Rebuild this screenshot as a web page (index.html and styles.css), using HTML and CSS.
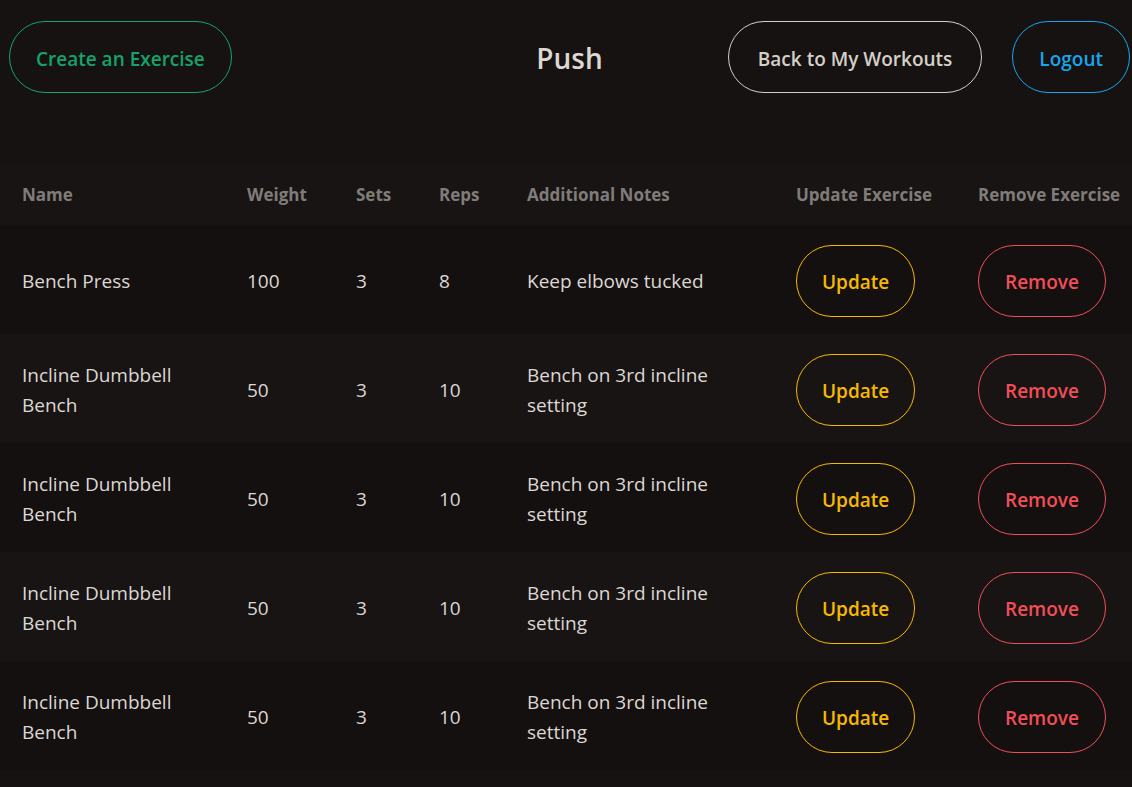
FILE: index.html
```html
<!DOCTYPE html>
<html lang="en">
<head>
<meta charset="utf-8">
<title>Push</title>
<link rel="stylesheet" href="styles.css">
</head>
<body>
<header class="topbar">
  <div class="left"><button class="pill pill-green">Create an Exercise</button></div>
  <h1 class="title">Push</h1>
  <div class="right">
    <button class="pill pill-light">Back to My Workouts</button>
    <button class="pill pill-blue">Logout</button>
  </div>
</header>
<table class="exercises">
  <colgroup>
    <col class="c-name"><col class="c-weight"><col class="c-sets"><col class="c-reps"><col class="c-notes"><col class="c-update"><col class="c-remove">
  </colgroup>
  <thead>
    <tr><th>Name</th><th>Weight</th><th>Sets</th><th>Reps</th><th>Additional Notes</th><th>Update Exercise</th><th>Remove Exercise</th></tr>
  </thead>
  <tbody>
    <tr><td>Bench Press</td><td>100</td><td>3</td><td>8</td><td>Keep elbows tucked</td><td><button class="pill pill-yellow">Update</button></td><td><button class="pill pill-red">Remove</button></td></tr>
    <tr><td>Incline Dumbbell Bench</td><td>50</td><td>3</td><td>10</td><td>Bench on 3rd incline setting</td><td><button class="pill pill-yellow">Update</button></td><td><button class="pill pill-red">Remove</button></td></tr>
    <tr><td>Incline Dumbbell Bench</td><td>50</td><td>3</td><td>10</td><td>Bench on 3rd incline setting</td><td><button class="pill pill-yellow">Update</button></td><td><button class="pill pill-red">Remove</button></td></tr>
    <tr><td>Incline Dumbbell Bench</td><td>50</td><td>3</td><td>10</td><td>Bench on 3rd incline setting</td><td><button class="pill pill-yellow">Update</button></td><td><button class="pill pill-red">Remove</button></td></tr>
    <tr><td>Incline Dumbbell Bench</td><td>50</td><td>3</td><td>10</td><td>Bench on 3rd incline setting</td><td><button class="pill pill-yellow">Update</button></td><td><button class="pill pill-red">Remove</button></td></tr>
  </tbody>
</table>
</body>
</html>
```
FILE: styles.css
```css
html, body {
  margin: 0;
  padding: 0;
  background: #161212;
  color: #ddd7d2;
  font-family: "Open Sans", "Noto Sans", sans-serif;
}

.topbar {
  display: grid;
  grid-template-columns: 1fr auto 1fr;
  align-items: center;
  padding: 21px 2px 0 9px;
  height: 72px;
}
.topbar .left { display: flex; justify-content: flex-start; }
.topbar .right { display: flex; justify-content: flex-end; gap: 30px; }

.title {
  margin: 0;
  padding-top: 2px;
  font-size: 28px;
  font-weight: 600;
  color: #ddd7d2;
}

.pill {
  background: transparent;
  font-family: inherit;
  font-size: 19px;
  font-weight: 600;
  height: 72px;
  padding: 3px 26px 0;
  border-radius: 36px;
  border: 1px solid currentColor;
  cursor: pointer;
  white-space: nowrap;
}
.pill-light { padding: 3px 29px 0; }
.pill-green { color: #14a36a; }
.pill-light { color: #d6cfc8; }
.pill-blue { color: #17a6ec; }
.pill-yellow { color: #f7b900; }
.pill-red { color: #f24e58; }
.exercises .pill-yellow { padding: 3px 25px 0; }

.exercises {
  width: 100%;
  margin-top: 71px;
  border-collapse: collapse;
  table-layout: fixed;
}
.c-name { width: 225px; }
.c-weight { width: 109px; }
.c-sets { width: 83px; }
.c-reps { width: 88px; }
.c-notes { width: 269px; }
.c-update { width: 182px; }
.c-remove { width: 176px; }

.exercises th {
  text-align: left;
  font-size: 17px;
  font-weight: 700;
  color: #807c79;
  height: 61px;
  padding: 0 0 0 22px;
  background: #171413;
  white-space: nowrap;
}
.exercises td {
  font-size: 19px;
  line-height: 30px;
  height: 107px;
  padding: 2px 14px 0 22px;
  vertical-align: middle;
}
.exercises tbody tr:nth-child(even) { background: #181414; }
.exercises tbody tr:nth-child(odd) { background: #141010; }
```
